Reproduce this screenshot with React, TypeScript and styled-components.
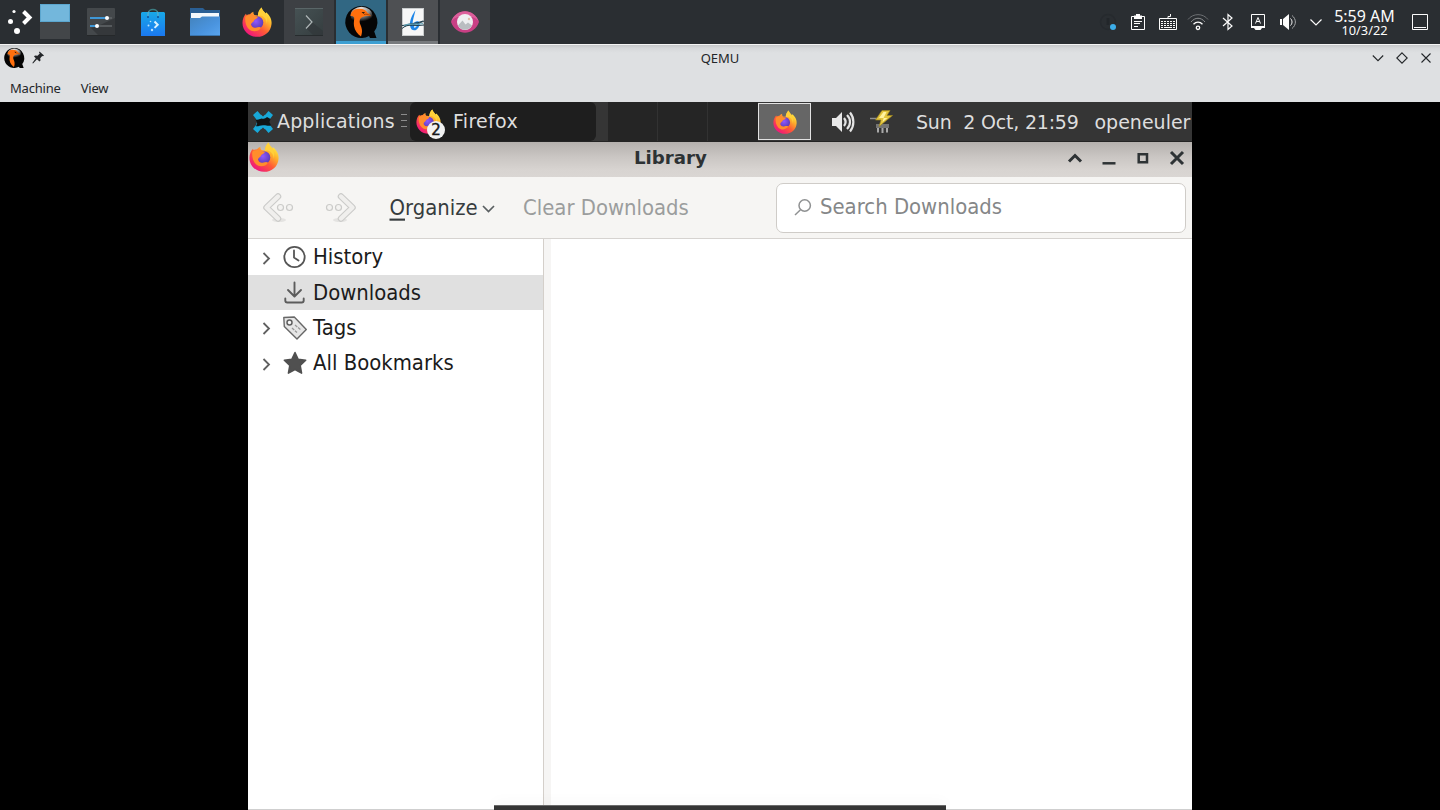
import React from "react";
import styled, { createGlobalStyle } from "styled-components";

const GlobalStyle = createGlobalStyle`
  * { box-sizing: border-box; }
  body { margin: 0; background: #000; overflow: hidden; }
  svg { display: block; flex: none; overflow: visible; }
`;

const Desktop = styled.div`
  width: 1440px;
  height: 810px;
  display: flex;
  flex-direction: column;
  background: #000;
  font-family: "Noto Sans", sans-serif;
  color: #232629;
  overflow: hidden;
`;

/* Host panel */
const HostPanel = styled.header`
  height: 44px;
  flex: none;
  display: flex;
  justify-content: space-between;
  background: #2a2e32;
`;
const Launchers = styled.div`
  display: flex;
  gap: 2px;
`;
const StartArea = styled.div`
  width: 74px;
  height: 44px;
  display: flex;
  align-items: flex-start;
  padding: 4px 0 0 7px;
  gap: 8px;
`;
const Pager = styled.div`
  width: 30px;
  height: 35px;
  display: flex;
  flex-direction: column;
`;
const PagerDesk = styled.div<{ $current?: boolean }>`
  height: 17.5px;
  background: ${(p) => (p.$current ? "#73b7dc" : "#434649")};
  border: ${(p) => (p.$current ? "1px solid #5ba6cf" : "none")};
`;
const Task = styled.div<{ $bg?: string; $line?: string }>`
  width: 50px;
  height: 44px;
  display: flex;
  align-items: center;
  justify-content: center;
  background: ${(p) => p.$bg || "transparent"};
  box-shadow: ${(p) => (p.$line ? `inset 0 -3px 0 ${p.$line}` : "none")};
`;
const Tray = styled.div`
  display: flex;
  align-items: center;
`;
const TrayCell = styled.div<{ $w?: number }>`
  width: ${(p) => p.$w || 30}px;
  display: flex;
  justify-content: center;
`;
const HostClock = styled.div`
  width: 71px;
  height: 44px;
  display: flex;
  flex-direction: column;
  align-items: center;
  padding-top: 8px;
  color: #fcfcfc;
`;
const ClockTime = styled.div`
  font-size: 16px;
  line-height: 16px;
  white-space: nowrap;
`;
const ClockDate = styled.div`
  font-size: 12.8px;
  line-height: 13px;
`;
const ShowDesktop = styled.div`
  width: 40px;
  display: flex;
  justify-content: center;
`;

/* QEMU window */
const QemuTop = styled.div`
  height: 58px;
  flex: none;
  background: linear-gradient(#f4f4f4 0 1px, #c5c7c9 1px, #d6d8da 4px, #dee0e2 9px, #dee0e2);
`;
const TitleRow = styled.div`
  height: 28px;
  display: grid;
  grid-template-columns: 1fr auto 1fr;
  align-items: center;
  padding: 0 8px;
`;
const TitleLeft = styled.div`
  display: flex;
  align-items: center;
  gap: 7px;
  margin-left: -4px;
`;
const TitleRight = styled.div`
  display: flex;
  justify-content: flex-end;
  gap: 12px;
`;
const HostTitle = styled.div`
  font-size: 13px;
  line-height: 18px;
`;
const MenuRow = styled.nav`
  height: 30px;
  display: flex;
  align-items: center;
  padding: 2px 10px 0;
  gap: 20px;
  font-size: 13px;
  letter-spacing: -0.2px;
`;
const MenuItem = styled.span`
  line-height: 18px;
`;

/* Guest display */
const Guest = styled.main`
  position: relative;
  width: 944px;
  height: 708px;
  margin: 0 auto;
  display: flex;
  flex-direction: column;
  background: #fff;
  font-family: "DejaVu Sans", sans-serif;
  overflow: hidden;
`;
const GuestPanel = styled.div`
  height: 40px;
  flex: none;
  display: flex;
  background: #353535;
  border-bottom: 1px solid #242424;
  color: #dedede;
  font-size: 19px;
  line-height: 41px;
  white-space: pre;
`;
const AppsButton = styled.div`
  width: 162px;
  display: flex;
  align-items: center;
  padding-left: 4px;
`;
const AppsLabel = styled.span`
  width: 124px;
  margin-left: 3px;
  letter-spacing: 0.15px;
`;
const Grip = styled.div`
  padding-bottom: 3px;
`;
const WindowButton = styled.div`
  width: 186px;
  margin-right: 12px;
  display: flex;
  align-items: center;
  gap: 8px;
  padding-left: 6px;
  background: #1e1e1e;
  border-radius: 6px;
  letter-spacing: 0.3px;
`;
const BadgedIcon = styled.div`
  position: relative;
  width: 29px;
  height: 25px;
`;
const Badge = styled.span`
  position: absolute;
  left: 11px;
  top: 12px;
  width: 18px;
  height: 18px;
  border-radius: 50%;
  background: #f1f1f1;
  color: #161616;
  font-size: 15px;
  letter-spacing: 0;
  line-height: 18px;
  text-align: center;
  -webkit-text-stroke: 0.4px #161616;
`;
const Workspaces = styled.div`
  width: 150px;
  display: flex;
  background: #252525;
`;
const Workspace = styled.div`
  width: 50px;
  border-right: 1px solid #323232;
  &:last-child { border-right: none; }
`;
const TrayTile = styled.div`
  width: 53px;
  height: 37px;
  margin-top: 1px;
  display: flex;
  align-items: center;
  justify-content: center;
  background: #666;
  border: 1.5px solid #e2e2e2;
`;
const GuestTray = styled.div`
  display: flex;
  align-items: center;
  width: 105px;
  padding-left: 20px;
  gap: 14px;
`;
const GuestClock = styled.div`
  width: 178.5px;
  letter-spacing: -0.2px;
`;
const GuestUser = styled.div``;

/* Library window */
const LibraryTitle = styled.div`
  height: 35px;
  flex: none;
  display: flex;
  justify-content: space-between;
  background: linear-gradient(#b5b1ae, #cbc7c4 45%, #d8d4d1 80%, #dad6d3);
`;
const LibraryIcon = styled.div`
  width: 31px;
  padding-left: 1px;
`;
const LibraryCaption = styled.div`
  width: 71px;
  margin-left: 355px;
  font-size: 18.2px;
  font-weight: 700;
  line-height: 31px;
  color: #2d3234;
  white-space: nowrap;
`;
const LibraryButtons = styled.div`
  margin-left: auto;
  padding: 7.5px 7.5px 0 0;
  display: flex;
  gap: 18px;
`;
const Toolbar = styled.div`
  height: 62px;
  flex: none;
  display: flex;
  align-items: center;
  padding: 1px 6px 0 14px;
  background: #f6f5f3;
  border-bottom: 1.5px solid #d6d3d0;
  font-size: 19.7px;
  white-space: nowrap;
`;
const NavIcon = styled.div`
  width: 64px;
`;
/* The guest's interface font is slightly taller than its width suggests. */
const TallText = styled.span`
  display: inline-block;
  transform: scaleY(1.06);
`;
const ToolText = styled.div<{ $w: number; $muted?: boolean }>`
  display: flex;
  align-items: center;
  gap: 4px;
  width: ${(p) => p.$w}px;
  margin-left: -0.5px;
  padding-top: 1px;
  color: ${(p) => (p.$muted ? "#9b9d9d" : "#373c3e")};
`;
const AccessKey = styled.span`
  text-decoration: underline;
  text-decoration-thickness: 1.5px;
  text-underline-offset: 2.5px;
`;
const SearchBox = styled.div`
  width: 410px;
  height: 50px;
  margin-left: auto;
  display: flex;
  align-items: center;
  gap: 8px;
  padding: 0 0 1px 17px;
  background: #fff;
  border: 1.5px solid #cfccc8;
  border-radius: 7px;
  color: #858788;
`;
const Body = styled.div`
  flex: 1;
  display: flex;
  border-bottom: 1px solid #cfcfcf;
`;
const Sidebar = styled.div`
  width: 295px;
  padding-top: 0.5px;
  font-size: 19.7px;
  color: #1b1b1b;
`;
const Splitter = styled.div`
  width: 8px;
  background: #f6f5f4;
  border-left: 1.5px solid #d4cfca;
`;
const Row = styled.div<{ $selected?: boolean }>`
  height: 35.4px;
  display: flex;
  align-items: center;
  padding-left: 13px;
  background: ${(p) => (p.$selected ? "#e0e0e0" : "transparent")};
  white-space: nowrap;
`;
const Twisty = styled.div`
  width: 22px;
  padding-top: 1px;
`;
const RowLabel = styled(TallText)`
  margin: 1px 0 0 6px;
  line-height: 35px;
`;
const Dock = styled.div`
  position: absolute;
  left: 246px;
  bottom: 0;
  width: 451.5px;
  height: 5px;
  background: #353535;
  border-top: 1px solid #6b6b6b;
  box-shadow: 0 -2px 14px rgba(0, 0, 0, 0.05);
`;

const Firefox = ({ size }: { size: number }) => (
  <svg width={size} height={size} viewBox="0 0 32 32">
    <defs>
      <linearGradient id="ffBody" x1="0.85" y1="0.1" x2="0.2" y2="0.9">
        <stop offset="0" stopColor="#fff044" />
        <stop offset="0.3" stopColor="#ffae2b" />
        <stop offset="0.6" stopColor="#ff5a36" />
        <stop offset="1" stopColor="#f0197a" />
      </linearGradient>
      <radialGradient id="ffGlobe" cx="0.4" cy="0.4" r="0.65">
        <stop offset="0" stopColor="#9059ff" />
        <stop offset="1" stopColor="#5b3bb5" />
      </radialGradient>
    </defs>
    <path fill="url(#ffBody)" d="M21 .5c.4 3 3 4.500 4 6.500l.8-1.300C29 8.500 32 12.500 31.500 18 30.800 26 24.500 31.800 16 31.800S.5 25.500.5 17C.5 13 2 9.500 4.200 7.200l.8 1.500C6 8 7 7.800 8.500 7.800c1-1.300 2.200-2.300 3.700-2.800-.2 1.300 0 2.500 1 3.500L17 9c0-3.500 1.500-6.500 4-8.500z" />
    <circle cx="16" cy="16.500" r="6.700" fill="url(#ffGlobe)" />
    <path fill="#ff8d2c" d="M3.500 10.500C6.500 7.500 11 8.500 13.500 9.500c1.500.6 3 .4 3.500 1-.3 2-3.500 2.500-4 3.500-.3 1.500-2 2-3.300 4C9 20.500 12 23 15.500 21.800c2-.5 3.500-.8 4.700.2-2 4-9 5.500-13 1.500C4 20 3 15 3.500 10.500z" />
    <path fill="#ffd03a" d="M21 .5c.4 3 3 4.500 4.200 6.700 2 3.500 2.300 7.500 1 11C27 13.500 23.500 10 20 9c-1 .2-2 .3-3 .5 0-3.500 1.500-7 4-9z" />
  </svg>
);

const Qemu = ({ size }: { size: number }) => (
  <svg width={size} height={size} viewBox="0 0 32 32">
    <defs>
      <radialGradient id="qemuShine" cx="0.45" cy="0.1" r="0.75">
        <stop offset="0" stopColor="#e8e8e8" />
        <stop offset="0.6" stopColor="#8a8a8a" />
        <stop offset="1" stopColor="#050505" />
      </radialGradient>
    </defs>
    <path fill="#050505" d="M16 0a16 16 0 1 0 8 30l1 2h6.500l-2.300-6.500A16 16 0 0 0 16 0z" />
    <ellipse cx="16.500" cy="9.500" rx="11" ry="8.700" fill="url(#qemuShine)" />
    <path fill="#ff6f0d" d="M5.500 10C6 5.500 9 2.700 14 2.700c5 0 7.700 2 8.500 4.300 1.500.3 2.800 1.500 3.200 3.300-3-.8-5.200-.6-7.700.4-3.300 1.300-4 4.300-2.700 7.800 1.500 3.500 2.700 6.500.7 12-3.500-2.500-6.300-6-7-10.500-.5-3.500.3-6 .2-8.300-.5-1.500-2-2-3.700-1.700z" />
    <path d="M16.500 6l3.500.3-1.500 1.500z" fill="#111" />
    <path d="M19 8.500c2-.5 4-.3 6 .8" fill="none" stroke="#8a3400" strokeWidth=".7" />
  </svg>
);

const Kickoff = () => (
  <svg width="25" height="30" viewBox="0 0 25 30" fill="#fff">
    <circle cx="7" cy="7.500" r="1.600" />
    <circle cx="3.500" cy="17.600" r="2.500" />
    <circle cx="10" cy="27" r="3" />
    <path d="M16.500 7.500l6 6-6 6" fill="none" stroke="#fff" strokeWidth="4" />
  </svg>
);

const Sliders = () => (
  <svg width="28" height="28" viewBox="0 0 28 28">
    <rect width="28" height="28" rx="1" fill="#44484b" />
    <path d="M4 20l7-2 17-8v18H12z" fill="#2f3234" opacity=".7" />
    <path d="M0 27.500h28" stroke="#25282a" />
    <path d="M3 10h16M3 18h7" stroke="#3f97d6" strokeWidth="2" />
    <path d="M20 10h5M10 18h15" stroke="#626669" strokeWidth="1.500" />
    <circle cx="20" cy="10" r="2" fill="#fff" />
    <circle cx="10" cy="18" r="2" fill="#fff" />
  </svg>
);

const Discover = () => (
  <svg width="24" height="28" viewBox="0 0 24 28">
    <defs>
      <linearGradient id="bag" x1="0" y1="0" x2="0" y2="1">
        <stop offset="0" stopColor="#18a8e8" />
        <stop offset="1" stopColor="#1b78f0" />
      </linearGradient>
    </defs>
    <path d="M7 10V6c0-6 10-6 10 0v4" fill="none" stroke="#3d7d83" strokeWidth="1.300" />
    <path d="M0 5l1-1h22l1 1v23H0z" fill="url(#bag)" />
    <path d="M7 9V6c0-1 .3-2 .8-2.500M17 9V6c0-1-.3-2-.8-2.500" fill="none" stroke="#6fb0bd" strokeWidth="1" />
    <circle cx="7" cy="9" r="1" fill="#0d4f97" /><circle cx="17" cy="9" r="1" fill="#0d4f97" />
    <path d="M13.500 13.500l3.200 3.200-3.200 3.200" fill="none" stroke="#d9f2ff" strokeWidth="2" />
    <g fill="#b5e2ff"><circle cx="9.500" cy="13.500" r=".8" /><circle cx="7.500" cy="17.500" r="1" /><circle cx="11" cy="22" r="1.200" /></g>
  </svg>
);

const Folder = () => (
  <svg width="30" height="28" viewBox="0 0 30 28">
    <defs>
      <linearGradient id="folder" x1="0" y1="0" x2="1" y2="1">
        <stop offset="0" stopColor="#4383bd" />
        <stop offset="0.6" stopColor="#4a94df" />
        <stop offset="1" stopColor="#5aa5ee" />
      </linearGradient>
    </defs>
    <path d="M0 0h13l2 2h15v12H0z" fill="#2a5f94" />
    <path d="M1 5h28v8H1z" fill="#f3f8fc" />
    <path d="M0 10h10l2-1.500h18V28H0z" fill="url(#folder)" />
    <path d="M0 27.500h30" stroke="#3974ad" />
  </svg>
);

const Konsole = () => (
  <svg width="28" height="28" viewBox="0 0 28 28">
    <defs>
      <linearGradient id="term" x1="0" y1="0" x2="1" y2="1">
        <stop offset="0" stopColor="#465254" />
        <stop offset="1" stopColor="#353d3f" />
      </linearGradient>
    </defs>
    <rect width="28" height="28" rx="1" fill="url(#term)" />
    <path d="M11 20l6-6 11 9v5H19z" fill="#303638" opacity=".6" />
    <path d="M0 .5h28" stroke="#5a6668" />
    <path d="M0 27.500h28" stroke="#272c2e" />
    <path d="M11 7.500l6 6.500-6 6.500" fill="none" stroke="#aeb6b7" strokeWidth="1.200" />
  </svg>
);

const Draft = () => (
  <svg width="24" height="28" viewBox="0 0 24 28">
    <rect x="1.500" y=".5" width="21" height="27" fill="#f7f7f7" stroke="#c9cccd" />
    <path d="M14.500 2C10.500 8 8.500 13 9 17.500c.4 4.500 4 6 6.700 4 3-2.300 3.800-6.800 1.800-8-2-.8-4.500.7-6 3.200C11.500 12 13.500 7 14.500 2z" fill="#1e86e8" />
    <path d="M14.500 16c1-1 2-1 2 0 0 2-2 4-3.200 3.800-1-.3-.3-2.500 1.200-3.800z" fill="#cfe6fa" />
    <path d="M1 20.500c5-5 15-3 22-7.500M1 17.500c7-1.500 14 1 22-.5M3 18c5-3 12-2 19-5" fill="none" stroke="#1d3c4a" strokeWidth="1" />
    <path d="M3 17.500c7-3 12 0 19-2" fill="none" stroke="#62a3b8" strokeWidth="1.300" />
  </svg>
);

const Viewer = () => (
  <svg width="28" height="22" viewBox="0 0 28 22">
    <path d="M0 11C5 -3.300 23 -3.300 28 11 23 25.300 5 25.300 0 11z" fill="#c94085" />
    <path d="M0 11C5 -3.300 23 -3.300 28 11c-4-8-24-8-28 0z" fill="#dc5f9b" />
    <circle cx="14" cy="11" r="8" fill="#eeeff1" />
    <path d="M7 14.500l4.500-5 3 4 2.500-2L21 14.500c-2 5-11 6-14 0z" fill="#b9bdc1" />
    <circle cx="18" cy="8" r="1.200" fill="#dfbfa9" />
  </svg>
);

const line = { fill: "none", stroke: "#fcfcfc", strokeWidth: 1 };

const HostTray = () => (
  <Tray>
    <TrayCell>
      <svg width="18" height="18" viewBox="0 0 18 18">
        <circle cx="9" cy="9" r="7.500" fill="none" stroke="#262a2e" strokeWidth="1.500" />
        <path d="M9 5v7" stroke="#22262a" strokeWidth="3" />
        <circle cx="14" cy="14" r="3" fill="#3daee9" />
      </svg>
    </TrayCell>
    <TrayCell>
      <svg width="14" height="16" viewBox="0 0 14 16">
        <path d="M.5 2.500h13v13H.5z" {...line} />
        <path d="M3 1.500h2V0h4v1.500h2V5H3z" fill="#fcfcfc" />
        <path d="M3 7.500h8M3 9.500h6M3 12.500h4" {...line} />
      </svg>
    </TrayCell>
    <TrayCell>
      <svg width="18" height="16" viewBox="0 0 18 16">
        <path d="M.5 4.500h17v11H.5zM9 4V2.500h2.500V0" {...line} />
        <path d="M2 7.500h14M2 9.500h14M2 11.500h14" {...line} strokeDasharray="2 1" />
        <path d="M2 13.500h2M5 13.500h8M14 13.500h2" {...line} />
      </svg>
    </TrayCell>
    <TrayCell>
      <svg width="20" height="16" viewBox="0 0 20 16">
        <path d="M0 5.500C5-1 15-1 20 5.500" {...line} stroke="#6c6f72" />
        <path d="M3 8c4-5 10-5 14 0" {...line} stroke="#8c8f91" />
        <path d="M5.500 10.300c2.700-3 6.300-3 9 0" {...line} strokeWidth="1.300" />
        <circle cx="10" cy="13.800" r="1.700" {...line} strokeWidth="1.300" />
      </svg>
    </TrayCell>
    <TrayCell>
      <svg width="10" height="16" viewBox="0 0 10 16">
        <path d="M0 4l9 8-4 3.500V.5L9 4l-9 8" {...line} strokeWidth="1.200" />
      </svg>
    </TrayCell>
    <TrayCell>
      <svg width="14" height="16" viewBox="0 0 14 16">
        <path d="M.5.500h13v12H.5zM4.500 9.500L7 3.500l2.500 6M5.200 7.500h3.600" {...line} />
        <path d="M0 12h14v2h-3l-1.500 2h-5L3 14H0z" fill="#fcfcfc" />
      </svg>
    </TrayCell>
    <TrayCell>
      <svg width="16" height="16" viewBox="0 0 16 16">
        <path d="M0 5h2v6H0zM3 5l6-5v16l-6-5z" fill="#fcfcfc" />
        <path d="M10.500 4.500c2 2 2 5 0 7" {...line} />
        <path d="M12 1.500c4.500 3.500 4.500 9.500 0 13" {...line} stroke="#a5a7a9" />
      </svg>
    </TrayCell>
    <TrayCell $w={26}>
      <svg width="12" height="7" viewBox="0 0 12 7"><path d="M.5.500L6 6 11.500.5" {...line} strokeWidth="1.200" /></svg>
    </TrayCell>
    <HostClock>
      <ClockTime>5:59 AM</ClockTime>
      <ClockDate>10/3/22</ClockDate>
    </HostClock>
    <ShowDesktop>
      <svg width="16" height="16" viewBox="0 0 16 16"><path d="M.5.500h15v15H.5zM2 13.500h12" {...line} /></svg>
    </ShowDesktop>
  </Tray>
);

const XfceMark = () => (
  <svg width="22" height="22" viewBox="0 0 22 22">
    <path fill="#18a8d8" d="M1 4l4.500-4 3 3.500h5l3-3.500L21 4l-3 4-1 3 1 3 3 4-4.500 4-3-3.500h-5l-3 3.500L1 18l3-4 1-3-1-3z" />
    <path fill="#101314" d="M7.500 0h7l-1 5.500h-5zM7.500 22h7l-1-5.500h-5z" fillOpacity="0" />
    <path fill="#353535" d="M8 2.500l3 3 3-3V0H8zM8 19.500l3-3 3 3V22H8z" />
    <path fill="#101314" d="M3.500 8.500c2 .5 3 0 4.500-.5 3-.8 4.500.5 7-2l3.500 2-1 3 1.500 3.500c-3 .8-4.500-.3-8-.2-3 .1-4.500 1.300-7 1l1.200-3z" />
  </svg>
);

const Nav = ({ flip }: { flip?: boolean }) => (
  <svg width="32" height="30" viewBox="0 0 32 30">
    <g transform={flip ? "translate(31 0) scale(-1 1)" : undefined}>
      <ellipse cx="17" cy="27" rx="7" ry="2" fill="#e4e3e1" />
      <path d="M16 3.500L4.500 14.500 16 25.500" fill="none" stroke="#cbcbc9" strokeWidth="6.500" strokeLinecap="round" strokeLinejoin="round" />
      <path d="M16 3.500L4.500 14.500 16 25.500" fill="none" stroke="#f0efed" strokeWidth="4.300" strokeLinecap="round" strokeLinejoin="round" />
      <circle cx="18.500" cy="14.500" r="3" fill="#f4f3f1" stroke="#cbcbc9" strokeWidth="1.200" />
      <circle cx="27.500" cy="14.500" r="3" fill="#f4f3f1" stroke="#cbcbc9" strokeWidth="1.200" />
    </g>
  </svg>
);

const HistoryIcon = () => (
  <svg width="24" height="24" viewBox="0 0 24 24" fill="none" stroke="#555" strokeWidth="1.800">
    <circle cx="11.500" cy="12" r="10.200" />
    <path d="M11 5.500v7l4.500 3" strokeLinecap="round" strokeLinejoin="round" />
  </svg>
);
const DownloadIcon = () => (
  <svg width="24" height="24" viewBox="0 0 24 24" fill="none" stroke="#5c5c5c" strokeWidth="1.900" strokeLinecap="round" strokeLinejoin="round">
    <path d="M11.500 1.500V15M5 9l6.500 6.500L18 9M2.300 17.500v2c0 1.500 1 2 2 2h14.400c1 0 2-.5 2-2v-2" />
  </svg>
);
const TagIcon = () => (
  <svg width="24" height="24" viewBox="0 0 24 24">
    <path d="M.8 1.500l10.500-.5L23.300 13.500l-9.300 9.500L1.300 10.500z" fill="#e6e6e6" stroke="#686868" strokeWidth="1.400" strokeLinejoin="round" />
    <circle cx="6.500" cy="6.500" r="2.500" fill="#f8f8f8" stroke="#606060" strokeWidth="1.500" />
    <path d="M12 9l6 5M9 12l5 4.500" stroke="#999" strokeWidth="1.300" strokeDasharray="3 1" />
  </svg>
);
const StarIcon = () => (
  <svg width="24" height="24" viewBox="0 0 24 24">
    <path d="M12 1.500l3.200 6.800 7.500 1-5.500 5.200 1.400 7.700L12 18.500l-6.600 3.700 1.400-7.700L1.300 9.300l7.500-1z" fill="#505050" stroke="#505050" strokeWidth="1.500" strokeLinejoin="round" />
  </svg>
);

const rows = [
  { label: "History", icon: <HistoryIcon />, open: true },
  { label: "Downloads", icon: <DownloadIcon />, selected: true },
  { label: "Tags", icon: <TagIcon />, open: true },
  { label: "All Bookmarks", icon: <StarIcon />, open: true },
];

export default function App() {
  return (
    <Desktop>
      <GlobalStyle />
      <HostPanel>
        <Launchers>
          <StartArea><Kickoff /><Pager><PagerDesk $current /><PagerDesk /></Pager></StartArea>
          <Task><Sliders /></Task>
          <Task><Discover /></Task>
          <Task><Folder /></Task>
          <Task><Firefox size={30} /></Task>
          <Task $bg="#3d4044"><Konsole /></Task>
          <Task $bg="#316783" $line="#3d9fd2"><Qemu size={32} /></Task>
          <Task $bg="#4e5053" $line="#777a7d"><Draft /></Task>
          <Task $bg="#3d4044"><Viewer /></Task>
        </Launchers>
        <HostTray />
      </HostPanel>

      <QemuTop>
        <TitleRow>
          <TitleLeft>
            <Qemu size={20} />
            <svg width="14" height="14" viewBox="0 0 14 14">
              <path d="M8 1l4.500 4-1 .8-.8-.3-2 2.200.3 2.300-1 1L5.500 8.700 1.500 13l-.7-.5 3.500-4.700L2.500 6l1-1 2.500.2L8.300 3 7.500 2z" fill="#232629" transform="translate(.5 -.5)" />
            </svg>
          </TitleLeft>
          <HostTitle>QEMU</HostTitle>
          <TitleRight>
            <svg width="12" height="12" viewBox="0 0 12 12" fill="none" stroke="#232629" strokeWidth="1.100"><path d="M.8 3.500L6 8.700l5.200-5.200" /></svg>
            <svg width="12" height="12" viewBox="0 0 12 12" fill="none" stroke="#232629" strokeWidth="1.100"><path d="M6 .8L11.200 6 6 11.200.8 6z" /></svg>
            <svg width="12" height="12" viewBox="0 0 12 12" fill="none" stroke="#232629" strokeWidth="1.100"><path d="M1.500 1.500l9 9M10.500 1.500l-9 9" /></svg>
          </TitleRight>
        </TitleRow>
        <MenuRow><MenuItem>Machine</MenuItem><MenuItem>View</MenuItem></MenuRow>
      </QemuTop>

      <Guest>
        <GuestPanel>
          <AppsButton>
            <XfceMark />
            <AppsLabel>Applications</AppsLabel>
            <Grip>
              <svg width="6" height="15" viewBox="0 0 6 15" stroke="#8c8c8c" strokeWidth="1.200"><path d="M0 1.500h6M0 7.500h6M0 13.500h6" /></svg>
            </Grip>
          </AppsButton>
          <WindowButton>
            <BadgedIcon><Firefox size={25} /><Badge>2</Badge></BadgedIcon>
            <span>Firefox</span>
          </WindowButton>
          <Workspaces><Workspace /><Workspace /><Workspace /></Workspaces>
          <TrayTile><Firefox size={24} /></TrayTile>
          <GuestTray>
            <svg width="25" height="22" viewBox="0 0 25 22" fill="none" stroke="#e4e4e4" strokeWidth="2.200">
              <path d="M1 7h4l6-6v20l-6-6H1z" fill="#e9e9e9" stroke="none" />
              <path d="M13 7c2 2.500 2 5.500 0 8M16 4c4 4 4 10 0 14M19 1.500c4.500 5.500 4.500 13.500 0 19" />
            </svg>
            <svg width="24" height="24" viewBox="0 0 24 24">
              <path d="M0 8.500h9" stroke="#8f8f8f" strokeWidth="1.500" />
              <path d="M6 14h13v4H6z" fill="#747474" />
              <path d="M8 18v4.500M12.500 18v5M17 18v4.500" stroke="#a9a9a9" strokeWidth="2" />
              <path d="M12 .5h8l-3 5h5.500L9 16.500l2-6.500H5.500z" fill="#e3c43c" stroke="#9c8521" strokeWidth=".7" />
              <path d="M13.500 2h3l-3 6h4l-5 4 1.200-4H9z" fill="#fff3a0" />
            </svg>
          </GuestTray>
          <GuestClock>{"Sun  2 Oct, 21:59"}</GuestClock>
          <GuestUser>openeuler</GuestUser>
        </GuestPanel>

        <LibraryTitle>
          <LibraryIcon><Firefox size={30} /></LibraryIcon>
          <LibraryCaption>Library</LibraryCaption>
          <LibraryButtons>
            <svg width="16" height="16" viewBox="0 0 16 16" fill="none" stroke="#2e3335" strokeWidth="3"><path d="M2 11.500L8 5.500l6 6" /></svg>
            <svg width="16" height="16" viewBox="0 0 16 16" fill="none" stroke="#2e3335" strokeWidth="2.500"><path d="M1.500 13.300h13" /></svg>
            <svg width="16" height="16" viewBox="0 0 16 16" fill="none" stroke="#2e3335" strokeWidth="2.500"><path d="M3.700 4.200h8.300v8H3.700z" /></svg>
            <svg width="16" height="16" viewBox="0 0 16 16" fill="none" stroke="#2e3335" strokeWidth="3"><path d="M2 2l12 12M14 2L2 14" /></svg>
          </LibraryButtons>
        </LibraryTitle>

        <Toolbar>
          <NavIcon><Nav /></NavIcon>
          <NavIcon><Nav flip /></NavIcon>
          <ToolText $w={134}>
            <TallText><AccessKey>O</AccessKey>rganize</TallText>
            <svg width="13" height="8" viewBox="0 0 13 8" fill="none" stroke="#5a5f61" strokeWidth="1.700"><path d="M1 1l5.500 5.500L12 1" /></svg>
          </ToolText>
          <ToolText $w={170} $muted><TallText>Clear Downloads</TallText></ToolText>
          <SearchBox>
            <svg width="18" height="19" viewBox="0 0 18 19" fill="none" stroke="#8f9192" strokeWidth="1.500">
              <circle cx="10.700" cy="7.500" r="5.700" /><path d="M6.500 11.700L1 17" />
            </svg>
            <TallText>Search Downloads</TallText>
          </SearchBox>
        </Toolbar>

        <Body>
          <Sidebar>
            {rows.map((r) => (
              <Row key={r.label} $selected={r.selected}>
                <Twisty>
                  {r.open && (
                    <svg width="10" height="12" viewBox="0 0 10 12" fill="none" stroke="#606060" strokeWidth="1.800"><path d="M2.500 1l5.500 5.500L2.500 12" /></svg>
                  )}
                </Twisty>
                {r.icon}
                <RowLabel>{r.label}</RowLabel>
              </Row>
            ))}
          </Sidebar>
          <Splitter />
        </Body>
        <Dock />
      </Guest>
    </Desktop>
  );
}
